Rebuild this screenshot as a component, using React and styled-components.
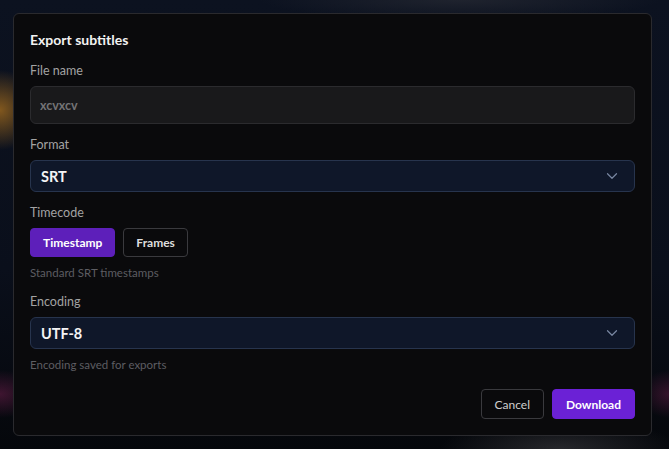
import React, { useState } from 'react';
import styled, { createGlobalStyle } from 'styled-components';
import { ChevronDown } from 'lucide-react';

const GlobalStyle = createGlobalStyle`
    html, body {
        margin: 0;
        padding: 0;
        width: 100%;
        height: 100%;
        background: #05070c;
        font-family: "Segoe UI", Lato, "Open Sans", sans-serif;
    }
    #root {
        height: 100%;
    }
    * {
        box-sizing: border-box;
    }
`;

const Backdrop = styled.div`
    height: 100%;
    padding: 13px 17px 13px 13px;
    display: flex;
    align-items: center;
    background:
        radial-gradient(ellipse 40px 40px at 0px 110px, rgba(150, 100, 30, 0.85), transparent),
        radial-gradient(ellipse 40px 24px at 0px 394px, rgba(100, 28, 70, 0.6), transparent),
        radial-gradient(ellipse 30px 24px at 669px 394px, rgba(100, 28, 70, 0.5), transparent),
        radial-gradient(ellipse 120px 30px at 560px 449px, rgba(60, 60, 64, 0.6), transparent),
        radial-gradient(ellipse 200px 20px at 460px 0px, rgba(50, 52, 60, 0.5), transparent),
        linear-gradient(180deg, #0c1220 0%, #0a0f1b 60%, #05070b 100%);
`;

const Dialog = styled.div`
    width: 100%;
    height: 100%;
    background: #0a0a0c;
    border: 1px solid #2a2a2e;
    border-radius: 6px;
    padding: 16px;
    display: flex;
    flex-direction: column;
    gap: 13px;
`;

const Title = styled.h2`
    margin: 0;
    font-size: 14px;
    line-height: 20px;
    font-weight: 700;
    color: #f2f2f2;
`;

const Field = styled.div`
    display: flex;
    flex-direction: column;
    gap: 7px;
`;

const Label = styled.label`
    font-size: 12.5px;
    line-height: 16px;
    color: #a3a3a3;
`;

const TextInput = styled.input`
    height: 38px;
    width: 100%;
    padding: 0 9px;
    background: #19191b;
    border: 1px solid #2b2b2e;
    border-radius: 6px;
    color: #737375;
    font-family: inherit;
    font-size: 12.5px;
    font-weight: 700;
    outline: none;
`;

const SelectBox = styled.div`
    height: 32px;
    display: flex;
    align-items: center;
    justify-content: space-between;
    padding: 0 13px 0 10px;
    background: #0f1729;
    border: 1px solid #27344d;
    border-radius: 6px;
    color: #f4f4f5;
    font-size: 14.5px;
    font-weight: 700;

    svg {
        color: #7886a0;
    }
`;

const ToggleRow = styled.div`
    display: flex;
    gap: 8px;
`;

const Toggle = styled.button`
    height: 29px;
    padding: 0 12px;
    border-radius: 4px;
    font-family: inherit;
    font-size: 12px;
    font-weight: 700;
    cursor: pointer;
    border: 1px solid ${p => (p.$active ? '#5d1fba' : '#3a3a3e')};
    background: ${p => (p.$active ? '#5d1fba' : 'transparent')};
    color: ${p => (p.$active ? '#ffffff' : '#dedede')};
`;

const Hint = styled.div`
    margin-top: 1px;
    font-size: 11.5px;
    line-height: 16px;
    color: #5d5d62;
`;

const Footer = styled.div`
    margin-top: 3px;
    display: flex;
    justify-content: flex-end;
    gap: 8px;
`;

const Button = styled.button`
    height: 30px;
    padding: 0 13px;
    border-radius: 4px;
    font-family: inherit;
    font-size: 12px;
    cursor: pointer;
    border: 1px solid ${p => (p.$primary ? '#6b21d6' : '#3a3a3e')};
    background: ${p => (p.$primary ? '#6b21d6' : 'transparent')};
    color: ${p => (p.$primary ? '#ffffff' : '#cfcfcf')};
    font-weight: ${p => (p.$primary ? 700 : 400)};
`;

function Select({ value }) {
    return (
        <SelectBox>
            <span>{value}</span>
            <ChevronDown size={18} strokeWidth={1.6} />
        </SelectBox>
    );
}

export default function App() {
    const [mode, setMode] = useState('timestamp');
    return (
        <>
            <GlobalStyle />
            <Backdrop>
                <Dialog>
                    <Title>Export subtitles</Title>
                    <Field>
                        <Label>File name</Label>
                        <TextInput defaultValue="xcvxcv" />
                    </Field>
                    <Field>
                        <Label>Format</Label>
                        <Select value="SRT" />
                    </Field>
                    <Field>
                        <Label>Timecode</Label>
                        <ToggleRow>
                            <Toggle $active={mode === 'timestamp'} onClick={() => setMode('timestamp')}>Timestamp</Toggle>
                            <Toggle $active={mode === 'frames'} onClick={() => setMode('frames')}>Frames</Toggle>
                        </ToggleRow>
                        <Hint>Standard SRT timestamps</Hint>
                    </Field>
                    <Field>
                        <Label>Encoding</Label>
                        <Select value="UTF-8" />
                        <Hint>Encoding saved for exports</Hint>
                    </Field>
                    <Footer>
                        <Button>Cancel</Button>
                        <Button $primary>Download</Button>
                    </Footer>
                </Dialog>
            </Backdrop>
        </>
    );
}
